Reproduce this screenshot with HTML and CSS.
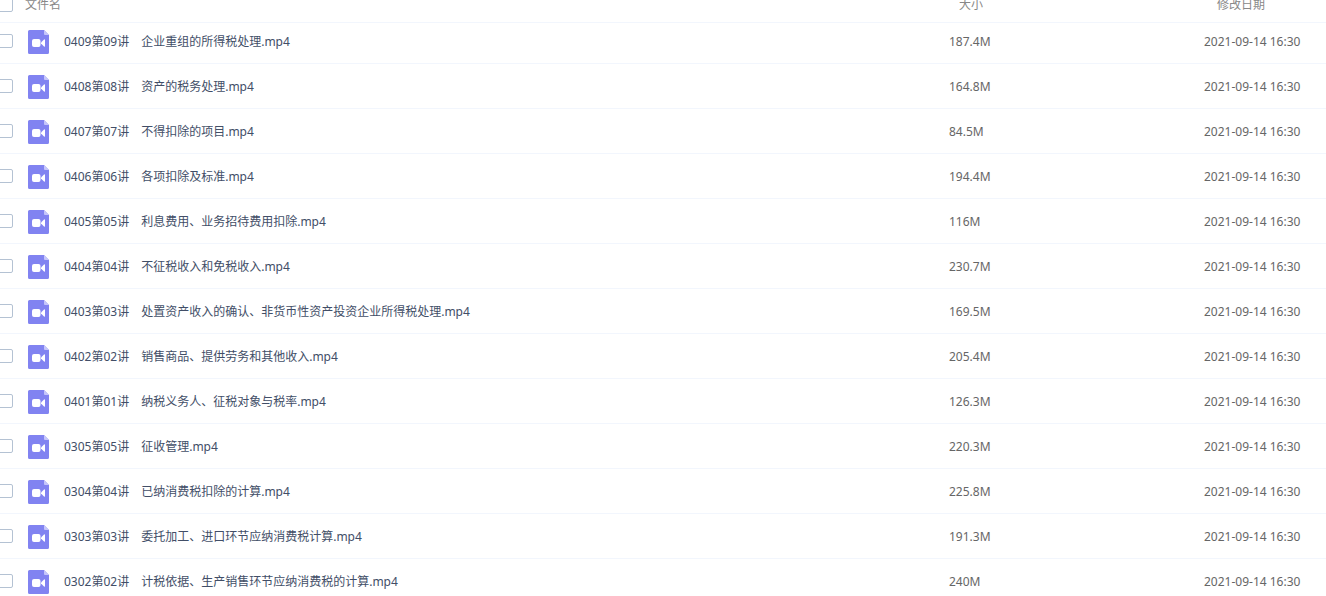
FILE: index.html
```
<!DOCTYPE html>
<html lang="zh-CN">
<head>
    <meta charset="UTF-8">
    <meta name="viewport" content="width=device-width, initial-scale=1.0">
    <title>文件列表</title>
    <link rel="stylesheet" href="styles.css">
</head>
<body>

<svg class="sprite" aria-hidden="true">
    <symbol id="icon-video" viewBox="0 0 21 24">
        <path fill="#8183f1" d="M1.500 0H16l5 5v17.500a1.500 1.500 0 0 1-1.500 1.500h-18a1.500 1.500 0 0 1-1.500-1.500v-21a1.500 1.500 0 0 1 1.500-1.500z"/>
        <path fill="#c5c6fa" d="M16 0l5 5h-4a1 1 0 0 1-1-1z"/>
        <rect fill="#fff" x="4" y="9" width="8.500" height="8" rx="2"/>
        <path fill="#fff" d="M13 12.500L16 9.500q1-.6 1 .5v6q0 1.100-1 .5L13 13.500z"/>
    </symbol>
</svg>

<table class="file-table">
    <thead>
        <tr>
            <th class="col-name">
                <div class="file-cell">
                    <input type="checkbox" id="checkAll" aria-label="全选">
                    <label for="checkAll">文件名</label>
                </div>
            </th>
            <th class="col-size">大小</th>
            <th class="col-date">修改日期</th>
        </tr>
    </thead>
    <tbody id="fileList"></tbody>
</table>

<script>
const files = [
    { name: '0409第09讲　企业重组的所得税处理.mp4', size: '187.4M', date: '2021-09-14 16:30' },
    { name: '0408第08讲　资产的税务处理.mp4', size: '164.8M', date: '2021-09-14 16:30' },
    { name: '0407第07讲　不得扣除的项目.mp4', size: '84.5M', date: '2021-09-14 16:30' },
    { name: '0406第06讲　各项扣除及标准.mp4', size: '194.4M', date: '2021-09-14 16:30' },
    { name: '0405第05讲　利息费用、业务招待费用扣除.mp4', size: '116M', date: '2021-09-14 16:30' },
    { name: '0404第04讲　不征税收入和免税收入.mp4', size: '230.7M', date: '2021-09-14 16:30' },
    { name: '0403第03讲　处置资产收入的确认、非货币性资产投资企业所得税处理.mp4', size: '169.5M', date: '2021-09-14 16:30' },
    { name: '0402第02讲　销售商品、提供劳务和其他收入.mp4', size: '205.4M', date: '2021-09-14 16:30' },
    { name: '0401第01讲　纳税义务人、征税对象与税率.mp4', size: '126.3M', date: '2021-09-14 16:30' },
    { name: '0305第05讲　征收管理.mp4', size: '220.3M', date: '2021-09-14 16:30' },
    { name: '0304第04讲　已纳消费税扣除的计算.mp4', size: '225.8M', date: '2021-09-14 16:30' },
    { name: '0303第03讲　委托加工、进口环节应纳消费税计算.mp4', size: '191.3M', date: '2021-09-14 16:30' },
    { name: '0302第02讲　计税依据、生产销售环节应纳消费税的计算.mp4', size: '240M', date: '2021-09-14 16:30' }
];

function displayFiles(files) {
    const fileList = document.getElementById('fileList');

    files.forEach((file, i) => {
        const row = document.createElement('tr');
        row.innerHTML = `
            <td>
                <div class="file-cell">
                    <input type="checkbox" id="file${i}">
                    <svg class="file-icon" aria-hidden="true"><use href="#icon-video"/></svg>
                    <label for="file${i}">${file.name}</label>
                </div>
            </td>
            <td class="meta">${file.size}</td>
            <td class="meta">${file.date}</td>
        `;
        fileList.appendChild(row);
    });
}

displayFiles(files);

// Tick or untick every row with the header box
document.getElementById('checkAll').addEventListener('change', e => {
    document.querySelectorAll('#fileList input').forEach(box => {
        box.checked = e.target.checked;
    });
});
</script>

</body>
</html>
```

FILE: styles.css
```
* {
    box-sizing: border-box;
}
body {
    margin: 0;
    overflow: hidden;
    background-color: #fff;
    font-family: "Noto Sans", "Noto Sans CJK SC", sans-serif;
    font-size: 12px;
    line-height: 18px;
    color: #424e67;
}
.sprite {
    display: none;
}
/* the list is scrolled a little past its header */
.file-table {
    width: 100%;
    margin-top: -17px;
    border-collapse: separate;
    border-spacing: 0;
    table-layout: fixed;
}
.file-table th,
.file-table td {
    height: 45px;
    padding: 2px 0 0;
    border-bottom: 1px solid #f2f6fd;
    text-align: left;
    white-space: nowrap;
}
.file-table th {
    height: 40px;
    padding-top: 4px;
    font-weight: normal;
    color: #888;
}
.file-table tbody tr:first-child td {
    height: 41px;
    padding-bottom: 4px;
}
.file-table .col-size {
    width: 255px;
    padding-left: 10px;
}
.file-table .col-date {
    width: 122px;
    padding-left: 13px;
}
.file-table .meta {
    color: #666;
}
.file-cell {
    display: flex;
    align-items: center;
    margin-left: -2px;
}
.file-cell input {
    appearance: none;
    flex: none;
    width: 15px;
    height: 14px;
    margin: 0;
    border: 1px solid #b4c2d3;
    border-radius: 2px;
    background-color: #fff;
}
.file-table td input {
    margin-bottom: 2px;
}
.file-cell input:checked {
    background-color: #8183f1;
}
.file-cell label {
    margin-left: 12px;
}
.file-icon {
    flex: none;
    width: 21px;
    height: 24px;
    margin-left: 15px;
}
.file-icon + label {
    margin-left: 15px;
}
```
